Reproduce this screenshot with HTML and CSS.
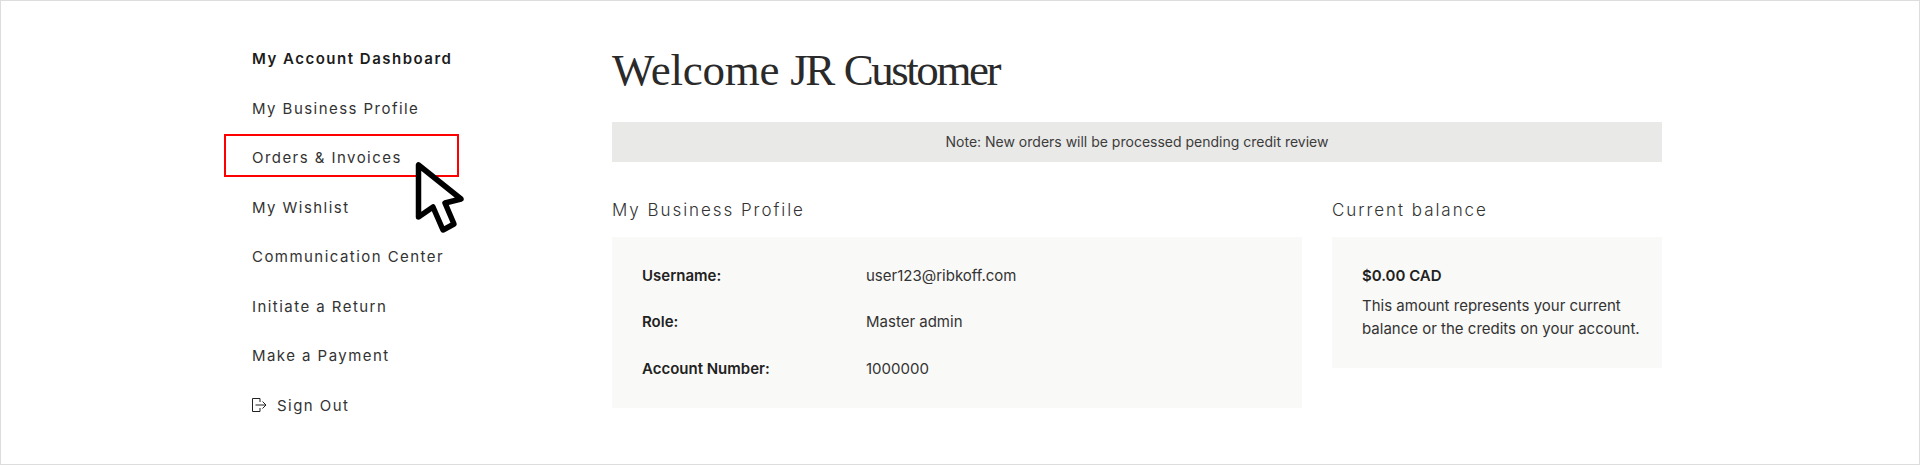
FILE: index.html
```html
<!DOCTYPE html>
<html lang="en">
<head>
  <meta charset="UTF-8">
  <meta name="viewport" content="width=device-width, initial-scale=1.0">
  <title>My Account Dashboard</title>
  <link rel="stylesheet" href="styles.css">
</head>
<body>
  <div class="page">
    <nav class="side-nav">
      <a class="nav-item active">My Account Dashboard</a>
      <a class="nav-item">My Business Profile</a>
      <a class="nav-item highlighted">Orders &amp; Invoices
        <span class="red-box"></span>
        <svg class="cursor" width="80" height="90" viewBox="0 0 80 90">
          <path d="M18.5 15 L18.5 67 L33 57 L43 80 L54 74 L45 53 L61 49 Z" fill="#fff" stroke="#000" stroke-width="5.5" stroke-linejoin="round"/>
        </svg>
      </a>
      <a class="nav-item">My Wishlist</a>
      <a class="nav-item">Communication Center</a>
      <a class="nav-item">Initiate a Return</a>
      <a class="nav-item">Make a Payment</a>
      <a class="nav-item sign-out">
        <svg class="sign-icon" width="16" height="16" viewBox="0 0 16 16">
          <path d="M9 1.5H1.5V14.5H9M9 1.5V5M9 14.5V11M4.5 8H15M11.5 4.5L15 8L11.5 11.5" fill="none" stroke="#222" stroke-width="1"/>
        </svg>
        Sign Out
      </a>
    </nav>

    <main class="content">
      <h1 class="welcome"><span class="welcome-word">Welcome</span> JR Customer</h1>
      <div class="note">Note: New orders will be processed pending credit review</div>

      <div class="panels">
        <section class="profile-panel">
          <h2 class="panel-title">My Business Profile</h2>
          <div class="card profile-card">
            <div class="row"><b>Username:</b><span>user123@ribkoff.com</span></div>
            <div class="row"><b>Role:</b><span>Master admin</span></div>
            <div class="row"><b>Account Number:</b><span>1000000</span></div>
          </div>
        </section>
        <section class="balance-panel">
          <h2 class="panel-title">Current balance</h2>
          <div class="card balance-card">
            <b class="amount">$0.00 CAD</b>
            <p>This amount represents your current balance or the credits on your account.</p>
          </div>
        </section>
      </div>
    </main>
  </div>
</body>
</html>
```

FILE: styles.css
```css
* {
  box-sizing: border-box;
}

body {
  margin: 0;
  font-family: Inter, "Liberation Sans", sans-serif;
  color: #222;
  background: #fff;
}

.page {
  display: flex;
  height: 465px;
  border: 1px solid #ddd;
  padding-left: 251px;
}

.side-nav {
  display: flex;
  flex-direction: column;
  width: 360px;
  padding-top: 33px;
}

.nav-item {
  position: relative;
  display: flex;
  align-items: center;
  height: 49.5px;
  font-size: 15px;
  letter-spacing: 1.45px;
  color: #333;
}

.active {
  font-weight: 600;
  letter-spacing: 1.5px;
  color: #1c1c1c;
}

/* annotation over the nav item */
.red-box {
  position: absolute;
  left: -28px;
  top: 1px;
  width: 235px;
  height: 43px;
  border: 2px solid #f00;
}

.cursor {
  position: absolute;
  left: 148px;
  top: 17px;
}

.sign-icon {
  margin-left: -1px;
  margin-right: 10px;
}

.content {
  width: 1050px;
}

.welcome {
  margin: 0;
  padding-top: 42px;
  height: 121px;
  font-family: "Liberation Serif", serif;
  font-weight: 400;
  font-size: 45px;
  line-height: 54px;
  letter-spacing: -2.45px;
  word-spacing: 2px;
  color: #2a2a2a;
}

.welcome-word {
  letter-spacing: -0.2px;
}

.note {
  height: 40px;
  line-height: 40px;
  text-align: center;
  font-size: 14px;
  color: #3c3c3c;
  background: #e9e9e7;
}

.panels {
  display: flex;
  gap: 30px;
  margin-top: 36px;
  align-items: flex-start;
}

.profile-panel {
  width: 690px;
}

.balance-panel {
  width: 330px;
}

.panel-title {
  margin: 0 0 15px;
  font-size: 17px;
  line-height: 24px;
  font-weight: 300;
  letter-spacing: 1.95px;
  color: #333;
}

.card {
  background: #f9f9f7;
  padding: 30px;
  font-size: 15px;
  color: #333;
}

.profile-card {
  height: 171px;
  padding-top: 27.6px;
}

.row {
  display: flex;
  height: 46.5px;
  line-height: 22px;
}

.row b {
  width: 224px;
  font-weight: 600;
  color: #222;
}

.balance-card {
  height: 131px;
  padding-top: 28px;
  padding-right: 20px;
}

.amount {
  display: block;
  font-weight: 600;
  line-height: 22px;
  color: #222;
}

.balance-card p {
  margin: 7px 0 0;
  line-height: 23px;
}
```
